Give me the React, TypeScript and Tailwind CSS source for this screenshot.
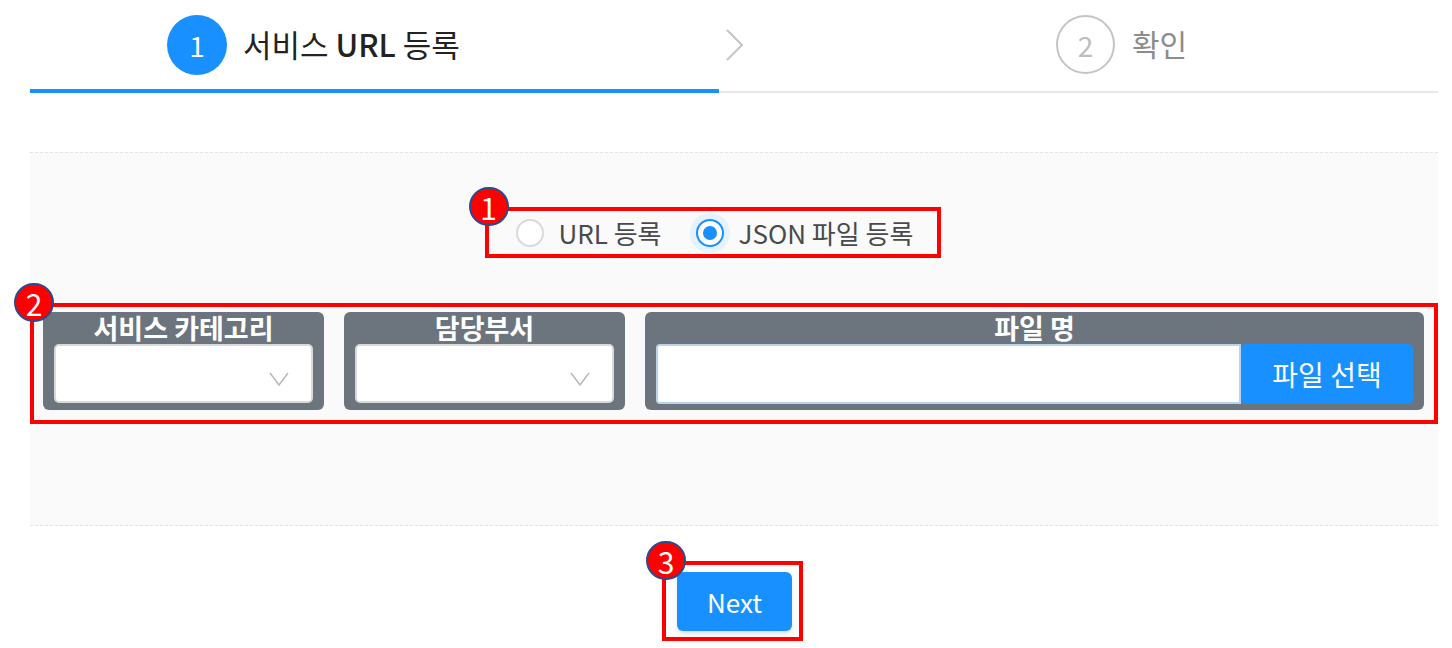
import React from 'react'

const font = { fontFamily: '"Noto Sans CJK KR", "Noto Sans", sans-serif' }

function Badge({ n }: { n: number }) {
  return (
    <div className="absolute -left-[20px] -top-[24px] w-[40px] h-[39px] rounded-full bg-[#ff0000] border-2 border-[#2d4a8c] flex items-center justify-center text-white text-[30px] leading-none">
      {n}
    </div>
  )
}

function Chevron() {
  return (
    <svg width="20" height="14" viewBox="0 0 20 14" fill="none">
      <path d="M1 1 L10 13 L19 1" stroke="#b8b8b8" strokeWidth="1.5" />
    </svg>
  )
}

function SelectCard({ label }: { label: string }) {
  return (
    <div className="w-[281px] h-[98px] rounded-[6px] bg-[#6c757e] px-[11px] flex flex-col">
      <div className="text-white font-bold text-[27px] leading-[32px] text-center h-[32px]">{label}</div>
      <div className="h-[59px] bg-white rounded-[5px] border-2 border-[#d9d9d9] flex items-center justify-end pr-[22px] pt-[10px]">
        <Chevron />
      </div>
    </div>
  )
}

export default function App() {
  return (
    <div className="w-[1452px] h-[648px] bg-white overflow-hidden" style={font}>
      <div className="ml-[30px] w-[1408px]">
        {/* steps */}
        <div className="flex items-center h-[89px]">
          <div className="w-[695px] flex items-center pl-[137px]">
            <div className="w-[60px] h-[60px] rounded-full bg-[#1890ff] text-white text-[28px] flex items-center justify-center">1</div>
            <div className="ml-[16px] mb-[3px] text-[31px] text-[#222] leading-none">
              서비스 <span className="font-medium">URL</span> 등록
            </div>
          </div>
          <svg width="20" height="34" viewBox="0 0 20 34" fill="none">
            <path d="M2 2 L17 17 L2 32" stroke="#c4c4c4" strokeWidth="2" />
          </svg>
          <div className="ml-[311px] w-[59px] h-[59px] rounded-full border-2 border-[#c4c4c4] text-[#bdbdbd] text-[28px] flex items-center justify-center">2</div>
          <div className="ml-[17px] mb-[3px] text-[30px] text-[#8c8c8c] leading-none">확인</div>
        </div>
        <div className="flex items-end h-[4px]">
          <div className="w-[689px] h-[4px] bg-[#1890ff]" />
          <div className="flex-1 h-[2px] bg-[#e8e8e8]" />
        </div>

        {/* form area */}
        <div className="mt-[59px] h-[374px] bg-[#fafafa] border-t border-b border-dashed border-[#e3e3e3] pt-[54px]">
          <div className="flex justify-center">
            <div className="relative ml-[-43px] w-[456px] h-[51px] border-4 border-[#ff0000] flex items-center pl-[27px]">
              <Badge n={1} />
              <div className="w-[28px] h-[28px] rounded-full border-2 border-[#d9d9d9] bg-white" />
              <span className="ml-[15px] text-[26px] text-[#4a4a4a]">URL 등록</span>
              <div className="ml-[28px] w-[40px] h-[40px] rounded-full bg-[#e6f2ff] flex items-center justify-center">
                <div className="w-[28px] h-[28px] rounded-full border-2 border-[#1890ff] bg-white flex items-center justify-center">
                  <div className="w-[14px] h-[14px] rounded-full bg-[#1890ff]" />
                </div>
              </div>
              <span className="ml-[9px] text-[26px] text-[#4a4a4a]">JSON 파일 등록</span>
            </div>
          </div>

          <div className="relative mt-[45px] h-[121px] border-4 border-[#ff0000] pl-[9px] pt-[5px] flex gap-[20px]">
            <Badge n={2} />
            <SelectCard label="서비스 카테고리" />
            <SelectCard label="담당부서" />
            <div className="flex-1 mr-[10px] h-[98px] rounded-[6px] bg-[#6c757e] px-[11px] flex flex-col">
              <div className="text-white font-bold text-[27px] leading-[32px] text-center h-[32px]">파일 명</div>
              <div className="flex h-[60px]">
                <div className="flex-1 bg-white rounded-l-[4px] border-2 border-[#b9d3ec]" />
                <div className="w-[172px] bg-[#1890ff] rounded-[5px] text-white text-[28px] flex items-center justify-center">파일 선택</div>
              </div>
            </div>
          </div>
        </div>

        {/* next */}
        <div className="flex justify-center mt-[35px]">
          <div className="relative ml-[-3px] w-[141px] h-[80px] border-4 border-[#ff0000] pl-[11px] pt-[7px]">
            <Badge n={3} />
            <div className="w-[115px] h-[59px] rounded-[6px] bg-[#1890ff] shadow-md text-white text-[26px] flex items-center justify-center">Next</div>
          </div>
        </div>
      </div>
    </div>
  )
}
